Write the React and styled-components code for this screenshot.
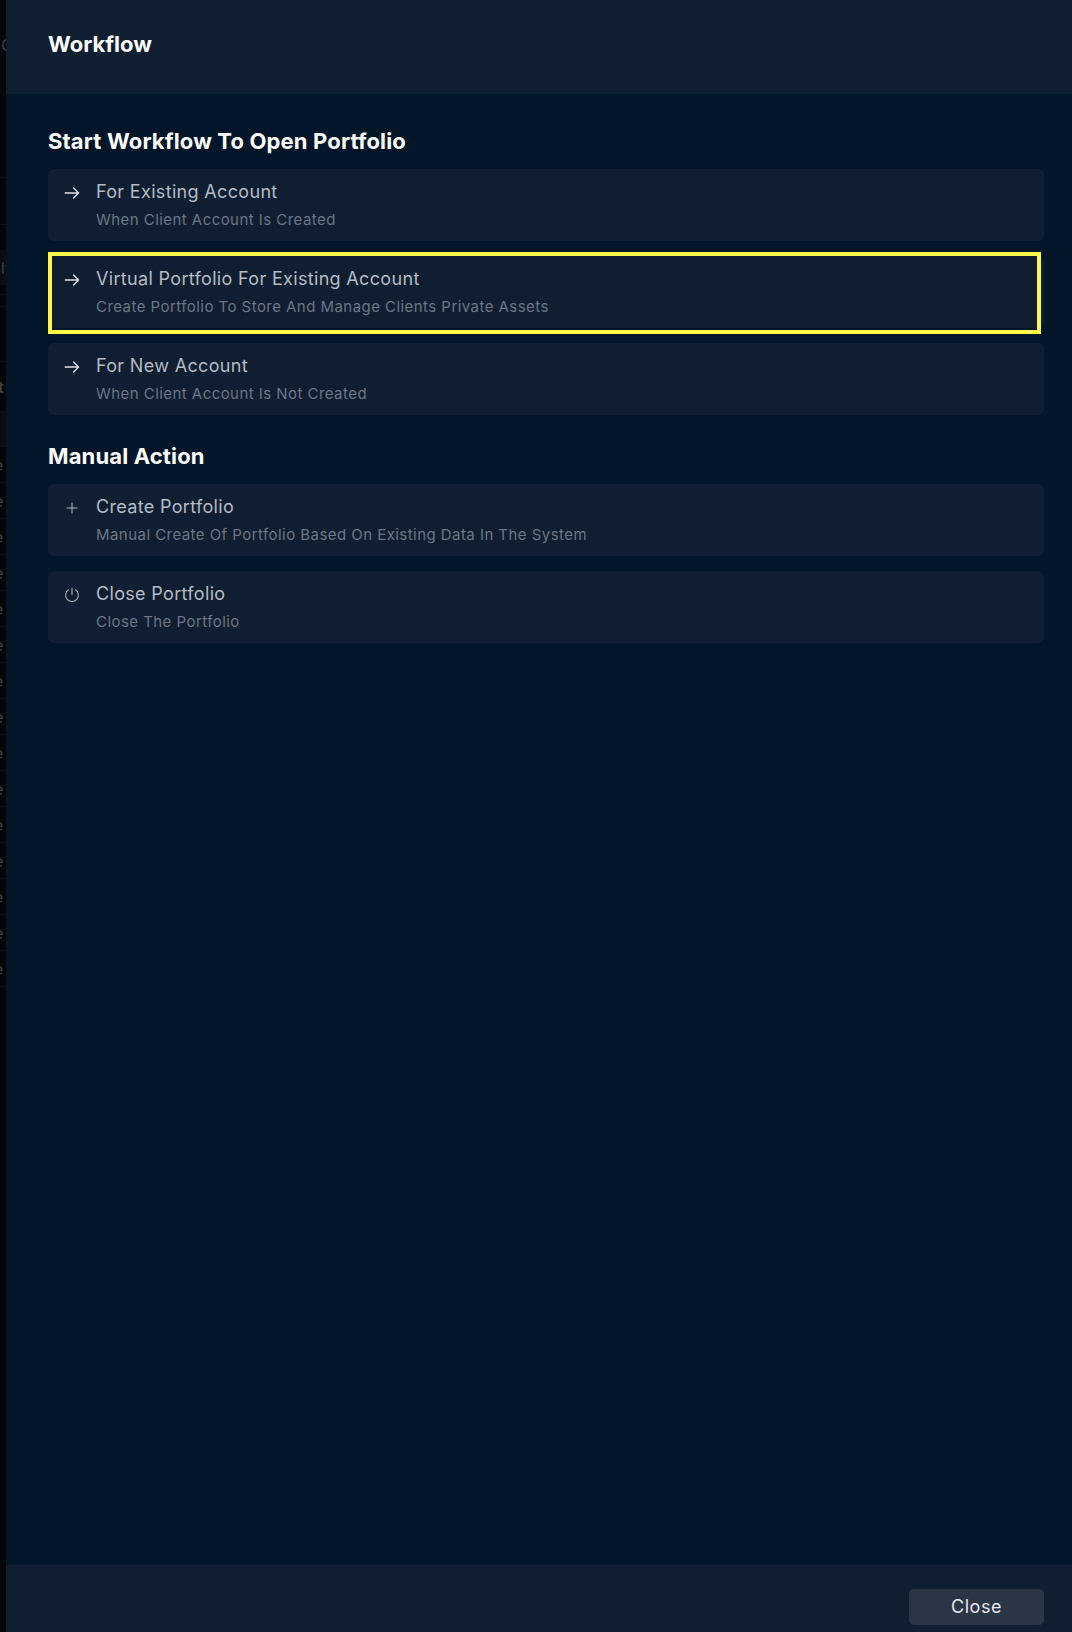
import React from "react";
import styled, { createGlobalStyle } from "styled-components";

const Global = createGlobalStyle`
  html, body { margin: 0; padding: 0; background: #040608; }
  * { box-sizing: border-box; }
`;
const Page = styled.div`
  display: flex; width: 1072px; height: 1632px; overflow: hidden;
  font-family: Inter, "Liberation Sans", sans-serif;
`;
const Backdrop = styled.div`
  width: 6px; flex: none; background: #040608; overflow: hidden; display: flex; flex-direction: column;
`;
const GhostRow = styled.div`
  flex: none; height: ${(p) => p.$h}px; display: flex; align-items: center; white-space: nowrap;
  font-size: 16px; font-weight: ${(p) => (p.$bold ? 700 : 400)}; color: #3b3e43;
  background: ${(p) => (p.$shade ? "#0b0c0e" : "transparent")};
  border-bottom: ${(p) => (p.$line ? "1px solid #0e1012" : "0")};
`;
const Glyph = styled.span`
  margin-left: ${(p) => p.$x}px;
`;
const Modal = styled.div`
  flex: 1; display: flex; flex-direction: column; background: #031528;
`;
const Header = styled.header`
  height: 94px; flex: none; background: #0f1f31; display: flex; align-items: center; padding-left: 42px; padding-bottom: 6px;
`;
const Title = styled.h1`
  margin: 0; font-size: 22px; font-weight: 700; color: #fff;
`;
const Body = styled.main`
  flex: 1; padding: 34px 28px 0 42px; display: flex; flex-direction: column;
`;
const SectionTitle = styled.h2`
  margin: 0 0 15px; height: 26px; line-height: 26px; font-size: 22px; font-weight: 700; color: #fff; letter-spacing: 0.15px;
`;
const List = styled.div`
  display: flex; flex-direction: column; gap: 15px; margin-bottom: 28px;
`;
const Card = styled.div`
  position: relative; height: 72px; background: #0f1f31; border-radius: 6px; display: flex; padding: 9px 16px 0;
`;
const Highlight = styled.div`
  position: absolute; left: 0; right: 3px; top: -4px; bottom: -6px; border: 4px solid #fdf94a;
`;
const IconSlot = styled.div`
  width: 32px; flex: none; padding-top: 7px; color: ${(p) => (p.$dim ? "#aab1bc" : "#dde0e5")};
  svg { display: block; }
`;
const CardTitle = styled.div`
  font-size: 18px; line-height: 28px; color: #b4bbc6; letter-spacing: 0.33px;
`;
const CardSub = styled.div`
  font-size: 15px; line-height: 20px; margin-top: 4px; color: #6b7585; letter-spacing: 0.45px;
`;
const Footer = styled.footer`
  height: 67px; flex: none; background: #0f1f31; display: flex; justify-content: flex-end; padding: 24px 28px 0 0;
`;
const CloseBtn = styled.button`
  width: 135px; height: 36px; border: 0; border-radius: 5px; background: #2a3546; color: #e6e8ec;
  font: 400 18px Inter, sans-serif; letter-spacing: 0.5px; padding: 0 0 2px;
`;

const Svg = ({ w = 1.2, children }) => (
  <svg width="16" height="16" viewBox="0 0 16 16" fill="none" stroke="currentColor" strokeWidth={w} strokeLinecap="round" strokeLinejoin="round">{children}</svg>
);
const ArrowIcon = () => <Svg w={1.3}><path d="M1.2 8H14.6M9.6 3l5 5-5 5" /></Svg>;
const PlusIcon = () => <Svg w={1.1}><path d="M8 3v10M3 8h10" /></Svg>;
const PowerIcon = () => <Svg w={1.1}><path d="M8 1.4v6.2M4.4 2.8a6.4 6.4 0 1 0 7.2 0" /></Svg>;

const Item = ({ icon: I, title, sub, hl, dim }) => (
  <Card>
    {hl && <Highlight />}
    <IconSlot $dim={dim}><I /></IconSlot>
    <div><CardTitle>{title}</CardTitle><CardSub>{sub}</CardSub></div>
  </Card>
);

const ghost = [
  { h: 90, g: "C", x: 1 }, { h: 88, line: true }, { h: 47, line: true }, { h: 25 },
  { h: 35, g: "lt", x: 1, shade: true }, { h: 10, line: true }, { h: 12, line: true },
  { h: 55, line: true }, { h: 50, g: "t", x: -2, bold: true, line: true },
  { h: 35, shade: true, line: true },
  ...Array.from({ length: 15 }, () => ({ h: 36, g: "e", x: -6, line: true })),
];

export default function App() {
  return (
    <Page>
      <Global />
      <Backdrop>
        {ghost.map((r, i) => (
          <GhostRow key={i} $h={r.h} $shade={r.shade} $line={r.line} $bold={r.bold}>
            {r.g && <Glyph $x={r.x}>{r.g}</Glyph>}
          </GhostRow>
        ))}
      </Backdrop>
      <Modal>
        <Header><Title>Workflow</Title></Header>
        <Body>
          <SectionTitle>Start Workflow To Open Portfolio</SectionTitle>
          <List>
            <Item icon={ArrowIcon} title="For Existing Account" sub="When Client Account Is Created" />
            <Item icon={ArrowIcon} hl title="Virtual Portfolio For Existing Account" sub="Create Portfolio To Store And Manage Clients Private Assets" />
            <Item icon={ArrowIcon} title="For New Account" sub="When Client Account Is Not Created" />
          </List>
          <SectionTitle>Manual Action</SectionTitle>
          <List>
            <Item icon={PlusIcon} dim title="Create Portfolio" sub="Manual Create Of Portfolio Based On Existing Data In The System" />
            <Item icon={PowerIcon} dim title="Close Portfolio" sub="Close The Portfolio" />
          </List>
        </Body>
        <Footer><CloseBtn>Close</CloseBtn></Footer>
      </Modal>
    </Page>
  );
}
